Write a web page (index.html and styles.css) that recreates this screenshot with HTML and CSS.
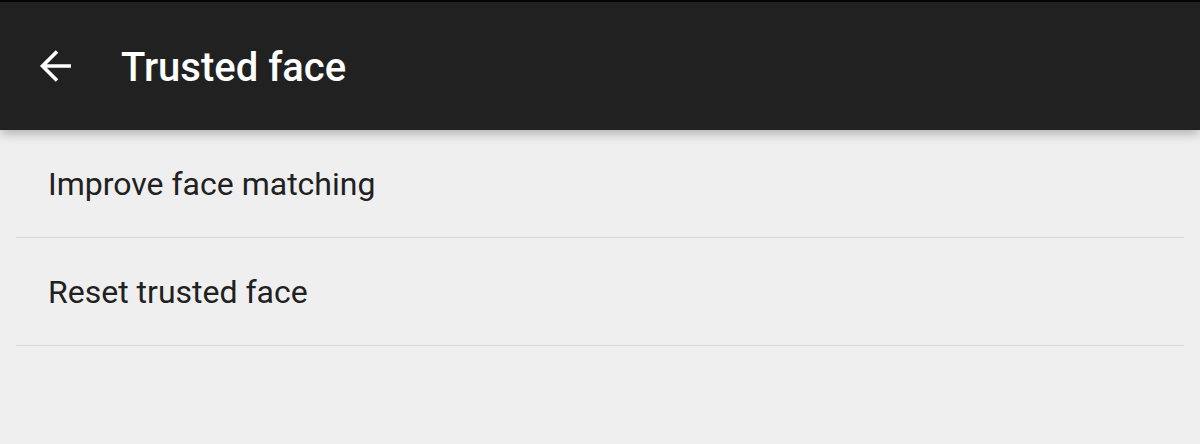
FILE: index.html
```html
<!DOCTYPE html>
<html lang="en">
<head>
    <meta charset="UTF-8">
    <meta name="viewport" content="width=device-width, initial-scale=1.0">
    <title>Trusted face</title>
    <link rel="stylesheet" href="styles.css">
</head>
<body>
    <header class="toolbar">
        <button class="back-btn" aria-label="Back">
            <svg width="34" height="34" viewBox="0 0 34 34">
                <path d="M3 17H32M18 2.5L3.5 17L18 31.5" fill="none" stroke="#ffffff" stroke-width="3.6"/>
            </svg>
        </button>
        <h1 class="title">Trusted face</h1>
    </header>

    <ul class="list">
        <li class="list-item">Improve face matching</li>
        <li class="list-item">Reset trusted face</li>
    </ul>
</body>
</html>
```

FILE: styles.css
```css
body {
    font-family: Roboto, "Noto Sans", sans-serif;
    background-color: #efefef;
    margin: 0;
    padding: 0;
}

.toolbar {
    display: flex;
    align-items: center;
    height: 128px;
    border-top: 2px solid #050505;
    background-color: #212121;
    box-shadow: 0 4px 10px rgba(0, 0, 0, 0.25);
    position: relative;
}

.back-btn {
    display: flex;
    align-items: center;
    justify-content: center;
    width: 34px;
    height: 34px;
    margin-left: 39px;
    padding: 0;
    background: none;
    border: none;
    cursor: pointer;
}

.title {
    margin: 2px 0 0 48px;
    color: #ffffff;
    font-size: 40px;
    font-weight: 500;
}

.list {
    list-style: none;
    margin: 0 16px;
    padding: 0;
}

.list-item {
    display: flex;
    align-items: center;
    height: 107px;
    padding-left: 32px;
    border-bottom: 1px solid #d6d6d6;
    color: #212121;
    font-size: 32px;
}
```
